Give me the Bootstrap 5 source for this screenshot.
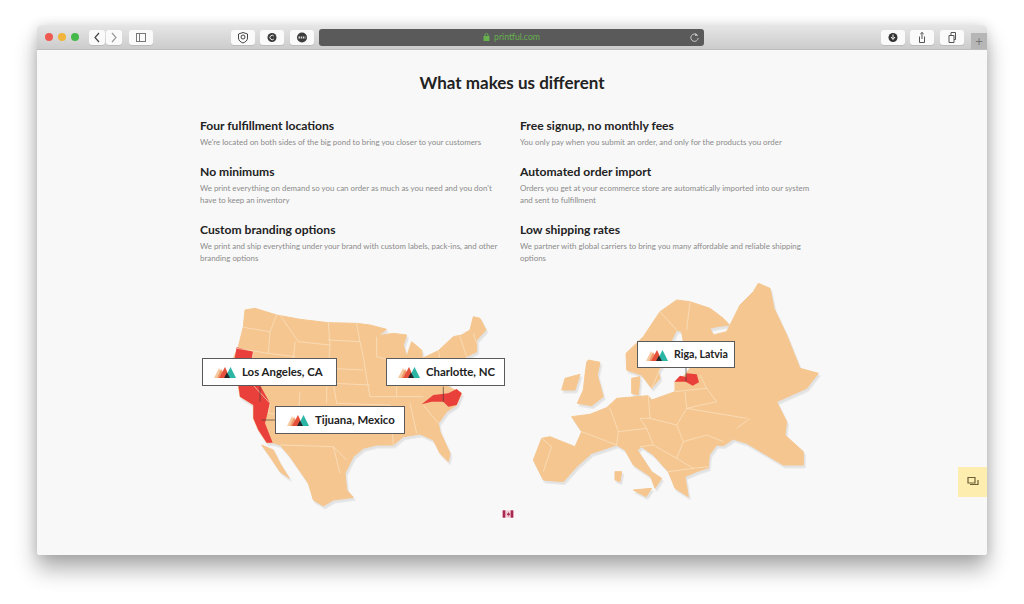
<!DOCTYPE html>
<html lang="en">
<head>
    <meta charset="UTF-8">
    <meta name="viewport" content="width=device-width, initial-scale=1.0">
    <title>What makes us different</title>
    <link href="https://cdn.jsdelivr.net/npm/bootstrap@5.3.2/dist/css/bootstrap.min.css" rel="stylesheet">
    <style>
        body { background: #fff; padding: 25px 37px 0; height: 604px; overflow: hidden; font-family: Lato, "Liberation Sans", sans-serif; }
        .browser-win { height: 530px; border-radius: 5px 5px 2px 2px; box-shadow: 0 14px 22px rgba(0,0,0,.32), 0 0 12px rgba(0,0,0,.12); background: #f8f8f8; overflow: hidden; }
        .title-bar { height: 25px; background: linear-gradient(#e6e6e6, #cccccc); border-bottom: 1px solid #bdbdbd; padding-left: 8px; }
        .light { width: 8px; height: 8px; border-radius: 50%; margin-right: 5px; }
        .light-red { background: #ee5a50; }
        .light-amber { background: #f0b53a; }
        .light-green { background: #45b84c; margin-right: 10px; }
        .bar-btn { width: 24px; height: 15px; background: #fafafa; border-radius: 3px; margin-right: 5px; color: #555; box-shadow: 0 1px 0 #bbb; }
        .bar-btn svg { display: block; }
        .nav-btn { width: 16px; margin-right: 1px; }
        .after-nav { margin-left: 6px; margin-right: 78px; }
        .gap-six { margin-right: 6px; }
        .addr { width: 386px; height: 17px; background: #5a5a5a; border-radius: 3px; margin-right: 177px; color: #66b04e; font-size: 8.7px; }
        .addr-reload { right: 4px; top: 3px; }
        .new-tab { width: 16px; height: 16px; background: #b6b6b6; color: #777; margin-left: 1px; font-size: 13px; line-height: 16px; }
        .page-body { height: 505px; padding-top: 21px; }
        .page-title { font-size: 17px; line-height: 24px; font-weight: 700; color: #222; margin: 0 0 23px; }
        .page-wrap { width: 640px; margin-left: 153px; }
        .fact { padding: 0 10px; margin-bottom: 16px; }
        .fact h3 { font-size: 12.1px; line-height: 16px; font-weight: 700; color: #222; margin: 0 0 2px; }
        .fact p { font-size: 7.9px; line-height: 12px; color: #8b8b8b; margin: 0; white-space: nowrap; }
        .facts { margin-bottom: -5px; }
        .us-map { width: 330px; height: 230px; margin-top: 15px; }
        .eu-map { width: 310px; height: 240px; }
        .map-art { display: block; width: 100%; height: 100%; }
        .map-shade { filter: drop-shadow(5px 8px 0 #e2e2e2); }
        .land { fill: #f5c68f; stroke: #f5c68f; stroke-width: 3; stroke-linejoin: round; }
        .hot { fill: #e9403c; }
        .borders { fill: none; stroke: #fbe6c8; stroke-width: 2; }
        .leader { stroke: #4a3a35; stroke-width: 2; }
        .pin { position: absolute; height: 28px; padding-left: 11px; background: #fff; border: 1px solid #5a5a5a; font-size: 11.4px; font-weight: 700; color: #222; white-space: nowrap; gap: 6px; }
        .pin-la { left: 12px; top: 68px; width: 135px; }
        .pin-cl { left: 196px; top: 68px; width: 119px; }
        .pin-tj { left: 85px; top: 116px; width: 130px; }
        .pin-rg { left: 117px; top: 66px; width: 98px; height: 27px; padding-left: 8px; font-size: 10.6px; }
        .chat-tab { position: absolute; right: 0; top: 442px; width: 29px; height: 30px; background: #fdeeb0; }
    </style>
</head>
<body>
    <svg width="0" height="0" class="position-absolute">
        <symbol id="logo" viewBox="0 0 22 12">
            <polygon points="0,12 5,2 10,12" fill="#f7c9a0"/>
            <polygon points="3,12 7,3 12,12" fill="#f09a6c"/>
            <polygon points="5,12 11,1 16,12" fill="#e5503a"/>
            <polygon points="11,12 16.5,1 22,12" fill="#2ab5a5"/>
            <polygon points="10,12 13,6.5 16,12" fill="#23282b"/>
        </symbol>
    </svg>

    <div class="browser-win position-relative">
        <div class="title-bar d-flex align-items-center">
            <span class="light light-red"></span>
            <span class="light light-amber"></span>
            <span class="light light-green"></span>
            <span class="bar-btn nav-btn"><svg width="16" height="15" viewBox="0 0 16 15"><path d="M10 3L6 7.500l4 4.500" fill="none" stroke="#444" stroke-width="1.200"/></svg></span>
            <span class="bar-btn nav-btn"><svg width="16" height="15" viewBox="0 0 16 15"><path d="M6 3l4 4.500-4 4.500" fill="none" stroke="#999" stroke-width="1.200"/></svg></span>
            <span class="bar-btn after-nav"><svg width="24" height="15" viewBox="0 0 24 15"><rect x="7.500" y="3.500" width="9" height="8" fill="none" stroke="#777"/><path d="M10.500 3.500v8" stroke="#777"/></svg></span>
            <span class="bar-btn"><svg width="24" height="15" viewBox="0 0 24 15"><path d="M12 2.500l4.500 1.500v4c0 2.500-2 4-4.500 5-2.500-1-4.500-2.500-4.500-5V4z" fill="none" stroke="#444"/><circle cx="12" cy="7" r="2" fill="none" stroke="#444"/></svg></span>
            <span class="bar-btn gap-six"><svg width="24" height="15" viewBox="0 0 24 15"><circle cx="12" cy="7.500" r="4.500" fill="#3c3c3c"/><path d="M13.800 6a2.200 2.200 0 1 0 0 3" fill="none" stroke="#eee"/></svg></span>
            <span class="bar-btn"><svg width="24" height="15" viewBox="0 0 24 15"><circle cx="12" cy="7.500" r="5" fill="#3c3c3c"/><path d="M8.500 7.500h7" stroke="#ddd" stroke-width="2" stroke-dasharray="1.500 .7"/></svg></span>
            <div class="addr position-relative d-flex align-items-center justify-content-center gap-1">
                <svg width="7" height="8" viewBox="0 0 7 8"><rect x=".5" y="3" width="6" height="5" fill="#66b04e"/><path d="M2 3V2a1.500 1.500 0 0 1 3 0v1" fill="none" stroke="#66b04e"/></svg>
                <span>printful.com</span>
                <svg class="addr-reload position-absolute" width="11" height="11" viewBox="0 0 11 11"><path d="M8.500 3.500a3.700 3.700 0 1 0 .7 2.500" fill="none" stroke="#c8c8c8"/><path d="M6.500 1l2.500 2.500-3 .5z" fill="#c8c8c8"/></svg>
            </div>
            <span class="bar-btn"><svg width="24" height="15" viewBox="0 0 24 15"><circle cx="12" cy="7.500" r="4.500" fill="#333"/><path d="M12 4.500v4M10 7l2 2.500L14 7" fill="none" stroke="#fff"/></svg></span>
            <span class="bar-btn gap-six"><svg width="24" height="15" viewBox="0 0 24 15"><path d="M9.500 6.500v6h5v-6M12 9V2.500M10.300 4L12 2.500 13.700 4" fill="none" stroke="#555"/></svg></span>
            <span class="bar-btn gap-six"><svg width="24" height="15" viewBox="0 0 24 15"><path d="M9 5.500h5v7H9zM11 5.500v-3h4.500v7H14" fill="none" stroke="#555"/></svg></span>
            <span class="new-tab align-self-end text-center">+</span>
        </div>

        <div class="page-body">
            <h1 class="page-title text-center">What makes us different</h1>
            <div class="page-wrap">
                <div class="row g-0 facts">
                    <div class="col-6 fact"><h3>Four fulfillment locations</h3><p>We're located on both sides of the big pond to bring you closer to your customers</p></div>
                    <div class="col-6 fact"><h3>Free signup, no monthly fees</h3><p>You only pay when you submit an order, and only for the products you order</p></div>
                    <div class="col-6 fact"><h3>No minimums</h3><p>We print everything on demand so you can order as much as you need and you don't<br>have to keep an inventory</p></div>
                    <div class="col-6 fact"><h3>Automated order import</h3><p>Orders you get at your ecommerce store are automatically imported into our system<br>and sent to fulfillment</p></div>
                    <div class="col-6 fact"><h3>Custom branding options</h3><p>We print and ship everything under your brand with custom labels, pack-ins, and other<br>branding options</p></div>
                    <div class="col-6 fact"><h3>Low shipping rates</h3><p>We partner with global carriers to bring you many affordable and reliable shipping<br>options</p></div>
                </div>
                <div class="d-flex align-items-start">
                    <div class="us-map position-relative">
                        <svg class="map-art" viewBox="0 0 990 690">
                            <g class="map-shade">
                                <path class="land" d="M165 60L195 55 260 75 330 88 415 98 500 100 540 105 590 118 565 137 610 130 650 135 640 165 650 200 665 155 695 180 697 205 745 182 790 140 815 135 840 120 850 80 870 85 888 120 860 150 860 185 820 205 790 240 775 290 815 310 800 345 770 365 745 400 750 425 780 490 775 515 750 490 730 450 690 432 640 440 610 465 560 465 520 475 490 500 465 550 470 600 490 622 430 630 400 648 370 630 355 580 300 500 270 465 248 458 230 458 205 420 190 385 190 345 150 320 145 290 130 205 145 170 160 110z"/>
                                <path class="land" d="M215 465L250 480 270 520 298 565 270 545 240 500z"/>
                            </g>
                            <path class="hot" d="M140 172L190 185 185 215 132 215zM145 285L210 285 240 340 225 400 248 458 230 458 205 420 190 385 190 345 150 320z"/>
                            <path class="hot" d="M695 343L730 315 775 310 800 297 815 310 800 345 775 350 760 335 725 335z"/>
                            <path class="borders" d="M160 112L240 125M260 75L240 125 235 190M140 175L235 190 315 200M190 185L175 270 240 340M325 155L420 165 415 235 310 225M315 155L305 270M270 75L325 155M415 98L420 165M415 150L510 155M500 100L510 155 520 200 530 265 540 320M415 235L520 240M305 270L430 280 540 285M240 340L235 370 330 380M330 305L325 380M410 280L410 340M430 280L440 340 600 345M540 320L620 320 700 320M600 345L610 465M660 340L680 430M700 345L745 400M620 215L620 320M560 140L560 200 620 215M700 205L700 290M745 182L760 250M810 140L830 200M850 130L860 160M270 465L430 470 470 510M430 470L450 550"/>
                            <line class="leader" x1="210" y1="290" x2="210" y2="335"/>
                            <line class="leader" x1="760" y1="290" x2="760" y2="335"/>
                            <line class="leader" x1="215" y1="390" x2="256" y2="390"/>
                            <rect x="938" y="661" width="32" height="22" fill="#f3d3da"/>
                            <g fill="#a8284f"><rect x="938" y="661" width="8" height="22"/><rect x="962" y="661" width="8" height="22"/><path d="M954 664l3 7 4-1-2 6h-3v5h-1v-5h-3l-2-6 4 1z"/></g>
                        </svg>
                        <div class="pin pin-la d-flex align-items-center"><svg width="22" height="12"><use href="#logo"/></svg><span>Los Angeles, CA</span></div>
                        <div class="pin pin-cl d-flex align-items-center"><svg width="22" height="12"><use href="#logo"/></svg><span>Charlotte, NC</span></div>
                        <div class="pin pin-tj d-flex align-items-center"><svg width="22" height="12"><use href="#logo"/></svg><span>Tijuana, Mexico</span></div>
                    </div>
                    <div class="eu-map position-relative">
                        <svg class="map-art" viewBox="0 0 930 720">
                            <g class="map-shade">
                                <path class="land" d="M40 555L65 490 90 485 165 515 185 470 155 425 210 418 260 398 290 370 385 362 395 375 465 350 465 320 495 300 520 265 490 200 485 170 470 165 455 195 445 235 415 290 420 310 395 340 365 300 320 285 318 235 370 185 420 110 470 75 510 80 570 100 610 130 628 150 590 155 570 160 580 180 620 170 640 130 660 90 700 50 715 25 750 40 762 100 800 180 840 280 895 295 860 340 770 380 800 440 795 480 850 530 850 570 790 570 680 505 640 492 610 512 590 510 568 540 565 578 530 590 495 605 505 665 465 640 445 590 400 540 365 515 352 525 395 590 425 610 405 640 392 605 340 570 315 525 290 510 215 535 170 575 130 620 70 615z"/>
                                <path class="land" d="M205 255L240 262 232 300 250 365 215 392 172 385 190 345 195 300 200 262zM125 345L135 310 180 298 165 345zM340 645L395 640 378 665zM285 590L305 590 300 620 285 615zM335 310L360 305 355 360 335 355z"/>
                            </g>
                            <path class="hot" d="M463 320L480 302 497 306 500 295 530 298 537 322 518 332 497 320z"/>
                            <path class="borders" d="M65 490L95 515 70 590M185 470L290 510M270 400L295 470 290 510M295 470L380 460 400 510 360 515M385 360L390 430 360 430 380 460M390 430L470 450 500 400 495 350M500 400L680 430M470 450L490 500 470 550 520 580M490 500L560 480 610 500M400 510L470 550M445 590L520 580 565 575M420 110L470 165M510 80L500 165M440 235L395 340M465 350L560 340 590 380 500 400M560 340L540 300M650 460L690 430"/>
                            <line class="leader" x1="498" y1="278" x2="498" y2="320"/>
                        </svg>
                        <div class="pin pin-rg d-flex align-items-center"><svg width="22" height="12"><use href="#logo"/></svg><span>Riga, Latvia</span></div>
                    </div>
                </div>
            </div>
        </div>

        <div class="chat-tab d-flex align-items-center justify-content-center">
            <svg width="12" height="12" viewBox="0 0 12 12"><path d="M1 1.500h7v5.500H1zM3 8.500h8V4" fill="none" stroke="#6b5f35" stroke-width="1.200"/></svg>
        </div>
    </div>
</body>
</html>
